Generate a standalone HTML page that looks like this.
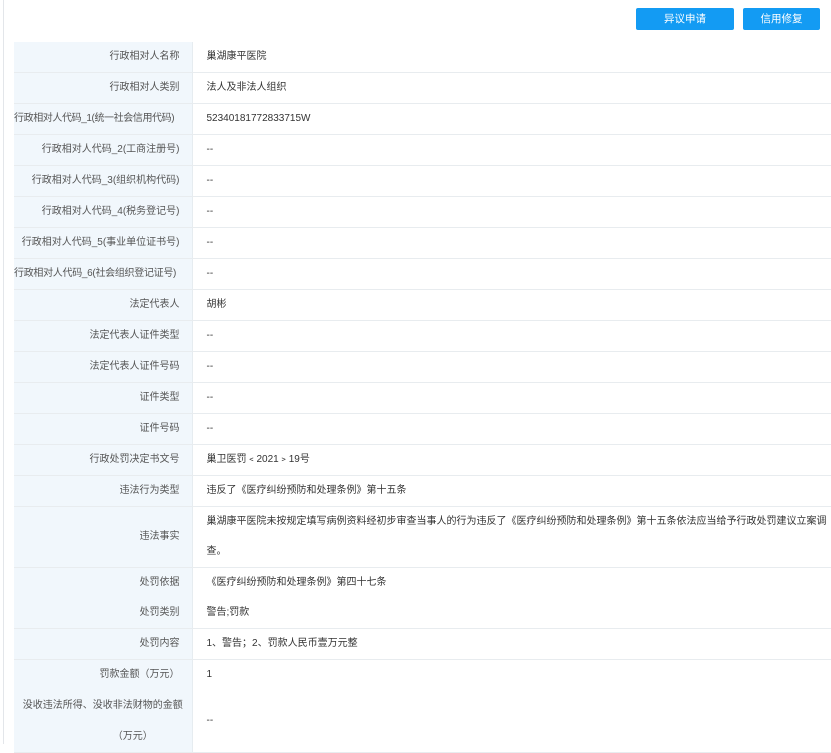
<!DOCTYPE html>
<html><head><meta charset="utf-8"><style>
body{margin:0;width:831px;height:744px;overflow:hidden;background:#fff;font-family:"Liberation Sans","Noto Sans CJK SC",sans-serif;font-size:10px;color:#333}
.lb{position:absolute;left:3px;top:0;width:1px;height:744px;background:#e3e6ea}
.btn{position:absolute;top:8px;height:22px;background:#139bf3;color:#fff;border-radius:2px;text-align:center;line-height:22px;font-size:10.5px}
table{position:absolute;left:14px;top:42px;width:817px;border-collapse:collapse;table-layout:fixed}
td{border-bottom:1px solid #e8ecef;height:29.7px;padding:0;line-height:30px;overflow:hidden}
td.l{width:166px;background:#f1f7fc;text-align:right;padding-right:12px;color:#555;border-right:1px solid #e6ecf0;white-space:nowrap}
td.v{padding-left:14px}
</style></head><body>
<div class="lb"></div>
<div class="btn" style="left:636px;width:98px">异议申请</div>
<div class="btn" style="left:743px;width:77px">信用修复</div>
<table>
<colgroup><col style="width:178px"><col></colgroup>
<tr><td class="l">行政相对人名称</td><td class="v">巢湖康平医院</td></tr>
<tr><td class="l">行政相对人类别</td><td class="v">法人及非法人组织</td></tr>
<tr><td class="l" style="padding-right:14px;letter-spacing:-0.4px;text-align:left">行政相对人代码_1(统一社会信用代码)</td><td class="v">52340181772833715W</td></tr>
<tr><td class="l">行政相对人代码_2(工商注册号)</td><td class="v">--</td></tr>
<tr><td class="l">行政相对人代码_3(组织机构代码)</td><td class="v">--</td></tr>
<tr><td class="l">行政相对人代码_4(税务登记号)</td><td class="v">--</td></tr>
<tr><td class="l">行政相对人代码_5(事业单位证书号)</td><td class="v">--</td></tr>
<tr><td class="l" style="letter-spacing:-0.3px;text-align:left">行政相对人代码_6(社会组织登记证号)</td><td class="v">--</td></tr>
<tr><td class="l">法定代表人</td><td class="v">胡彬</td></tr>
<tr><td class="l">法定代表人证件类型</td><td class="v">--</td></tr>
<tr><td class="l">法定代表人证件号码</td><td class="v">--</td></tr>
<tr><td class="l">证件类型</td><td class="v">--</td></tr>
<tr><td class="l">证件号码</td><td class="v">--</td></tr>
<tr><td class="l">行政处罚决定书文号</td><td class="v">巢卫医罚﹤2021﹥19号</td></tr>
<tr><td class="l">违法行为类型</td><td class="v">违反了《医疗纠纷预防和处理条例》第十五条</td></tr>
<tr><td class="l" style="height:60px">违法事实</td><td class="v" style="padding-right:4px">巢湖康平医院未按规定填写病例资料经初步审查当事人的行为违反了《医疗纠纷预防和处理条例》第十五条依法应当给予行政处罚建议立案调查。</td></tr>
<tr><td class="l" style="border-bottom:0">处罚依据</td><td class="v" style="border-bottom:0">《医疗纠纷预防和处理条例》第四十七条</td></tr>
<tr><td class="l">处罚类别</td><td class="v">警告;罚款</td></tr>
<tr><td class="l">处罚内容</td><td class="v">1、警告；2、罚款人民币壹万元整</td></tr>
<tr><td class="l" style="border-bottom:0">罚款金额（万元）</td><td class="v" style="border-bottom:0">1</td></tr>
<tr><td class="l" style="height:62px;line-height:31px;white-space:normal;text-align:center;padding-right:0;padding-left:0">没收违法所得、没收非法财物的金额<br><span style="padding-left:60px">（万元）</span></td><td class="v">--</td></tr>
</table>
</body></html>
